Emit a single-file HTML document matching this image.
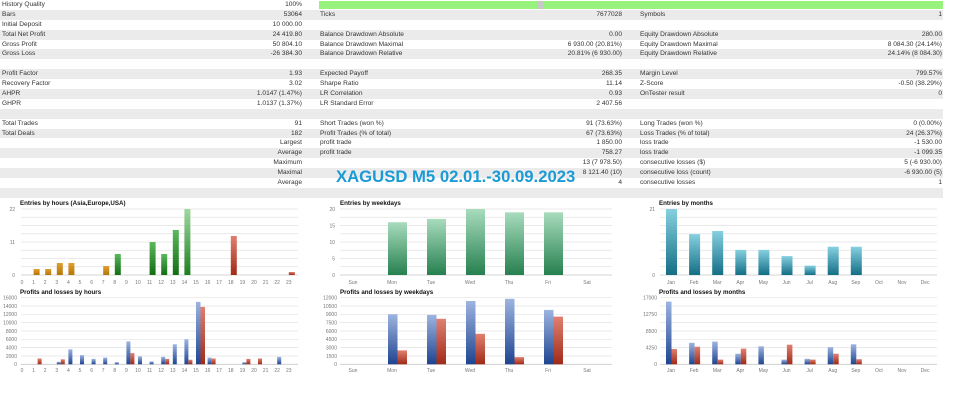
<!DOCTYPE html>
<html><head><meta charset="utf-8"><style>
body{margin:0;width:960px;height:412px;background:#fff;overflow:hidden;font-family:"Liberation Sans",sans-serif;}
.t{position:absolute;left:0;top:0;width:943px;}
.r{height:9.9px;position:relative;font-size:6.6px;line-height:9.9px;color:#333;}
.r.s{background:#ebebeb;}
.r span{position:absolute;white-space:nowrap;}
.a{left:2px}.b{right:641px;text-align:right}.c{left:320px}.d{right:321px;text-align:right}.e{left:640px}.f{right:1px;text-align:right}
.title{position:absolute;left:336px;top:167px;font-size:16.7px;font-weight:bold;color:#1b9ad6;}
svg{position:absolute;left:0;top:0}
svg text{font-family:"Liberation Sans",sans-serif;}
</style></head><body>
<div class="t">
<div class="r"><span class="a">History Quality</span><span class="b">100%</span></div>
<div class="r s"><span class="a">Bars</span><span class="b">53064</span><span class="c">Ticks</span><span class="d">7677028</span><span class="e">Symbols</span><span class="f">1</span></div>
<div class="r"><span class="a">Initial Deposit</span><span class="b">10 000.00</span></div>
<div class="r s"><span class="a">Total Net Profit</span><span class="b">24 419.80</span><span class="c">Balance Drawdown Absolute</span><span class="d">0.00</span><span class="e">Equity Drawdown Absolute</span><span class="f">280.00</span></div>
<div class="r"><span class="a">Gross Profit</span><span class="b">50 804.10</span><span class="c">Balance Drawdown Maximal</span><span class="d">6 930.00 (20.81%)</span><span class="e">Equity Drawdown Maximal</span><span class="f">8 084.30 (24.14%)</span></div>
<div class="r s"><span class="a">Gross Loss</span><span class="b">-26 384.30</span><span class="c">Balance Drawdown Relative</span><span class="d">20.81% (6 930.00)</span><span class="e">Equity Drawdown Relative</span><span class="f">24.14% (8 084.30)</span></div>
<div class="r"></div>
<div class="r s"><span class="a">Profit Factor</span><span class="b">1.93</span><span class="c">Expected Payoff</span><span class="d">268.35</span><span class="e">Margin Level</span><span class="f">799.57%</span></div>
<div class="r"><span class="a">Recovery Factor</span><span class="b">3.02</span><span class="c">Sharpe Ratio</span><span class="d">11.14</span><span class="e">Z-Score</span><span class="f">-0.50 (38.29%)</span></div>
<div class="r s"><span class="a">AHPR</span><span class="b">1.0147 (1.47%)</span><span class="c">LR Correlation</span><span class="d">0.93</span><span class="e">OnTester result</span><span class="f">0</span></div>
<div class="r"><span class="a">GHPR</span><span class="b">1.0137 (1.37%)</span><span class="c">LR Standard Error</span><span class="d">2 407.56</span></div>
<div class="r s"></div>
<div class="r"><span class="a">Total Trades</span><span class="b">91</span><span class="c">Short Trades (won %)</span><span class="d">91 (73.63%)</span><span class="e">Long Trades (won %)</span><span class="f">0 (0.00%)</span></div>
<div class="r s"><span class="a">Total Deals</span><span class="b">182</span><span class="c">Profit Trades (% of total)</span><span class="d">67 (73.63%)</span><span class="e">Loss Trades (% of total)</span><span class="f">24 (26.37%)</span></div>
<div class="r"><span class="b">Largest</span><span class="c">profit trade</span><span class="d">1 850.00</span><span class="e">loss trade</span><span class="f">-1 530.00</span></div>
<div class="r s"><span class="b">Average</span><span class="c">profit trade</span><span class="d">758.27</span><span class="e">loss trade</span><span class="f">-1 099.35</span></div>
<div class="r"><span class="b">Maximum</span><span class="d">13 (7 978.50)</span><span class="e">consecutive losses ($)</span><span class="f">5 (-6 930.00)</span></div>
<div class="r s"><span class="b">Maximal</span><span class="d">8 121.40 (10)</span><span class="e">consecutive loss (count)</span><span class="f">-6 930.00 (5)</span></div>
<div class="r"><span class="b">Average</span><span class="d">4</span><span class="e">consecutive losses</span><span class="f">1</span></div>
<div class="r s"></div>
</div>
<div style="position:absolute;left:319px;top:1px;width:624px;height:8px;background:#98f27e"></div>
<div style="position:absolute;left:537px;top:1px;width:7px;height:8px;background:#c8c8c8"></div>
<div class="title">XAGUSD M5 02.01.-30.09.2023</div>

<svg width="960" height="412" viewBox="0 0 960 412">
<defs>
<linearGradient id="go" x1="0" y1="0" x2="0" y2="1"><stop offset="0" stop-color="#e0a030"/><stop offset="1" stop-color="#b47508"/></linearGradient>
<linearGradient id="gg" x1="0" y1="0" x2="0" y2="1"><stop offset="0" stop-color="#5cb85c"/><stop offset="1" stop-color="#136d13"/></linearGradient>
<linearGradient id="gg2" x1="0" y1="0" x2="0" y2="1"><stop offset="0" stop-color="#a0d8a0"/><stop offset="1" stop-color="#1f7f1f"/></linearGradient>
<linearGradient id="gr" x1="0" y1="0" x2="0" y2="1"><stop offset="0" stop-color="#e08070"/><stop offset="1" stop-color="#a02a18"/></linearGradient>
<linearGradient id="gb" x1="0" y1="0" x2="0" y2="1"><stop offset="0" stop-color="#9db4e0"/><stop offset="1" stop-color="#1e4490"/></linearGradient>
<linearGradient id="gw" x1="0" y1="0" x2="0" y2="1"><stop offset="0" stop-color="#a8dcbc"/><stop offset="1" stop-color="#268050"/></linearGradient>
<linearGradient id="gt" x1="0" y1="0" x2="0" y2="1"><stop offset="0" stop-color="#86d0e0"/><stop offset="1" stop-color="#136e86"/></linearGradient>
</defs>
<g stroke="#e2e2e2" stroke-width="0.7">
<path d="M21 209H298M21 217.25H298M21 225.5H298M21 233.75H298M21 242H298M21 250.25H298M21 258.5H298M21 266.75H298"/>
<path d="M340 209H612M340 217.25H612M340 225.5H612M340 233.75H612M340 242H612M340 250.25H612M340 258.5H612M340 266.75H612"/>
<path d="M660 209H937M660 217.25H937M660 225.5H937M660 233.75H937M660 242H937M660 250.25H937M660 258.5H937M660 266.75H937"/>
<path d="M21 297.7H298M21 306H298M21 314.3H298M21 322.6H298M21 331H298M21 339.3H298M21 347.6H298M21 356H298"/>
<path d="M340 297.7H612M340 306H612M340 314.3H612M340 322.6H612M340 331H612M340 339.3H612M340 347.6H612M340 356H612"/>
<path d="M660 297.7H937M660 306H937M660 314.3H937M660 322.6H937M660 331H937M660 339.3H937M660 347.6H937M660 356H937"/>
</g>
<g stroke="#c8c8c8" stroke-width="0.8"><path d="M21 275H298M340 275H612M660 275H937M21 364.3H298M340 364.3H612M660 364.3H937"/></g>
<g font-size="6.2" font-weight="bold" fill="#111">
<text x="20" y="205">Entries by hours (Asia,Europe,USA)</text>
<text x="20" y="294">Profits and losses by hours</text>
<text x="340" y="205">Entries by weekdays</text>
<text x="340" y="294">Profits and losses by weekdays</text>
<text x="659" y="205">Entries by months</text>
<text x="659" y="294">Profits and losses by months</text>
</g>
<g font-size="5" fill="#777" text-anchor="end">
<text x="15" y="211">22</text><text x="15" y="244">11</text><text x="15" y="277">0</text>
<text x="17" y="299.5">16000</text><text x="17" y="307.8">14000</text><text x="17" y="316.1">12000</text><text x="17" y="324.4">10000</text><text x="17" y="332.8">8000</text><text x="17" y="341.1">6000</text><text x="17" y="349.4">4000</text><text x="17" y="357.8">2000</text><text x="17" y="366">0</text>
<text x="335" y="211">20</text><text x="335" y="227.5">15</text><text x="335" y="244">10</text><text x="335" y="260.5">5</text><text x="335" y="277">0</text>
<text x="337" y="299.5">12000</text><text x="337" y="307.8">10500</text><text x="337" y="316.1">9000</text><text x="337" y="324.4">7500</text><text x="337" y="332.8">6000</text><text x="337" y="341.1">4500</text><text x="337" y="349.4">3000</text><text x="337" y="357.8">1500</text><text x="337" y="366">0</text>
<text x="655" y="211">21</text><text x="655" y="277">0</text>
<text x="657" y="299.5">17000</text><text x="657" y="316.1">12750</text><text x="657" y="332.8">8500</text><text x="657" y="349.4">4250</text><text x="657" y="366">0</text>
</g>
<g font-size="5" fill="#777" text-anchor="middle">
<g transform="translate(0,284)"><text x="22">0</text><text x="33.6">1</text><text x="45.2">2</text><text x="56.8">3</text><text x="68.4">4</text><text x="80">5</text><text x="91.6">6</text><text x="103.2">7</text><text x="114.8">8</text><text x="126.4">9</text><text x="138">10</text><text x="149.6">11</text><text x="161.2">12</text><text x="172.8">13</text><text x="184.4">14</text><text x="196">15</text><text x="207.6">16</text><text x="219.2">17</text><text x="230.8">18</text><text x="242.4">19</text><text x="254">20</text><text x="265.6">21</text><text x="277.2">22</text><text x="288.8">23</text></g>
<g transform="translate(0,372)"><text x="22">0</text><text x="33.6">1</text><text x="45.2">2</text><text x="56.8">3</text><text x="68.4">4</text><text x="80">5</text><text x="91.6">6</text><text x="103.2">7</text><text x="114.8">8</text><text x="126.4">9</text><text x="138">10</text><text x="149.6">11</text><text x="161.2">12</text><text x="172.8">13</text><text x="184.4">14</text><text x="196">15</text><text x="207.6">16</text><text x="219.2">17</text><text x="230.8">18</text><text x="242.4">19</text><text x="254">20</text><text x="265.6">21</text><text x="277.2">22</text><text x="288.8">23</text></g>
<g transform="translate(0,284)"><text x="353">Sun</text><text x="392">Mon</text><text x="431">Tue</text><text x="470">Wed</text><text x="509">Thu</text><text x="548">Fri</text><text x="587">Sat</text></g>
<g transform="translate(0,372)"><text x="353">Sun</text><text x="392">Mon</text><text x="431">Tue</text><text x="470">Wed</text><text x="509">Thu</text><text x="548">Fri</text><text x="587">Sat</text></g>
<g transform="translate(0,284)"><text x="671">Jan</text><text x="694.1">Feb</text><text x="717.2">Mar</text><text x="740.3">Apr</text><text x="763.4">May</text><text x="786.5">Jun</text><text x="809.6">Jul</text><text x="832.7">Aug</text><text x="855.8">Sep</text><text x="878.9">Oct</text><text x="902">Nov</text><text x="925.1">Dec</text></g>
<g transform="translate(0,372)"><text x="671">Jan</text><text x="694.1">Feb</text><text x="717.2">Mar</text><text x="740.3">Apr</text><text x="763.4">May</text><text x="786.5">Jun</text><text x="809.6">Jul</text><text x="832.7">Aug</text><text x="855.8">Sep</text><text x="878.9">Oct</text><text x="902">Nov</text><text x="925.1">Dec</text></g>
</g>
<g fill="url(#go)"><rect x="33.6" y="269" width="6" height="6"/><rect x="45.2" y="269" width="6" height="6"/><rect x="56.8" y="263" width="6" height="12"/><rect x="68.4" y="263" width="6" height="12"/><rect x="103.2" y="266" width="6" height="9"/></g>
<g fill="url(#gg)"><rect x="114.8" y="254" width="6" height="21"/><rect x="149.6" y="242" width="6" height="33"/><rect x="161.2" y="254" width="6" height="21"/><rect x="172.8" y="230" width="6" height="45"/></g>
<rect x="184.4" y="209" width="6" height="66" fill="url(#gg2)"/>
<g fill="url(#gr)"><rect x="230.8" y="236" width="6" height="39"/><rect x="288.8" y="272" width="6" height="3"/></g>
<g fill="url(#gb)">
<rect x="56.8" y="361.8" width="4" height="2.5"/><rect x="68.4" y="349.3" width="4" height="15"/><rect x="80" y="355.1" width="4" height="9.2"/><rect x="91.6" y="358.9" width="4" height="5.4"/><rect x="103.2" y="357.6" width="4" height="6.7"/><rect x="114.8" y="362.2" width="4" height="2.1"/><rect x="126.4" y="341.4" width="4" height="22.9"/><rect x="138" y="356.4" width="4" height="7.9"/><rect x="149.6" y="361.4" width="4" height="2.9"/><rect x="161.2" y="356.8" width="4" height="7.5"/><rect x="172.8" y="344.3" width="4" height="20"/><rect x="184.4" y="339.3" width="4" height="25"/><rect x="196" y="301.9" width="4.5" height="62.4"/><rect x="207.6" y="357.6" width="4" height="6.7"/><rect x="242.4" y="362.2" width="4" height="2.1"/><rect x="277.2" y="356.8" width="4" height="7.5"/>
</g>
<g fill="url(#gr)">
<rect x="37.6" y="358.5" width="4" height="5.8"/><rect x="60.8" y="359.3" width="4" height="5"/><rect x="130.4" y="353.1" width="4" height="11.2"/><rect x="165.2" y="358.9" width="4" height="5.4"/><rect x="188.4" y="359.7" width="4" height="4.6"/><rect x="200.5" y="306.9" width="4.5" height="57.4"/><rect x="211.6" y="358.5" width="4" height="5.8"/><rect x="246.4" y="358.9" width="4" height="5.4"/><rect x="258" y="358.5" width="4" height="5.8"/>
</g>
<g fill="url(#gw)"><rect x="388" y="222.2" width="19" height="52.8"/><rect x="427" y="218.9" width="19" height="56.1"/><rect x="466" y="209" width="19" height="66"/><rect x="505" y="212.3" width="19" height="62.7"/><rect x="544" y="212.3" width="19" height="62.7"/></g>
<g fill="url(#gb)"><rect x="388" y="314.3" width="9.5" height="50"/><rect x="427" y="314.9" width="9.5" height="49.4"/><rect x="466" y="301" width="9.5" height="63.3"/><rect x="505" y="298.8" width="9.5" height="65.5"/><rect x="544" y="309.9" width="9.5" height="54.4"/></g>
<g fill="url(#gr)"><rect x="397.5" y="350.4" width="9.5" height="13.9"/><rect x="436.5" y="318.8" width="9.5" height="45.5"/><rect x="475.5" y="333.8" width="9.5" height="30.5"/><rect x="514.5" y="357.1" width="9.5" height="7.2"/><rect x="553.5" y="316.6" width="9.5" height="47.7"/></g>
<g fill="url(#gt)"><rect x="666" y="209" width="11" height="66"/><rect x="689.1" y="234.1" width="11" height="40.9"/><rect x="712.2" y="231" width="11" height="44"/><rect x="735.3" y="249.9" width="11" height="25.1"/><rect x="758.4" y="249.9" width="11" height="25.1"/><rect x="781.5" y="256.1" width="11" height="18.9"/><rect x="804.6" y="265.6" width="11" height="9.4"/><rect x="827.7" y="246.7" width="11" height="28.3"/><rect x="850.8" y="246.7" width="11" height="28.3"/></g>
<g fill="url(#gb)"><rect x="666" y="301.6" width="5.5" height="62.7"/><rect x="689.1" y="342.8" width="5.5" height="21.5"/><rect x="712.2" y="341.6" width="5.5" height="22.7"/><rect x="735.3" y="353.7" width="5.5" height="10.6"/><rect x="758.4" y="346.3" width="5.5" height="18"/><rect x="781.5" y="359.6" width="5.5" height="4.7"/><rect x="804.6" y="358.8" width="5.5" height="5.5"/><rect x="827.7" y="347.1" width="5.5" height="17.2"/><rect x="850.8" y="344.3" width="5.5" height="20"/></g>
<g fill="url(#gr)"><rect x="671.5" y="349" width="5.5" height="15.3"/><rect x="694.6" y="346.7" width="5.5" height="17.6"/><rect x="717.7" y="359.6" width="5.5" height="4.7"/><rect x="740.8" y="348.6" width="5.5" height="15.7"/><rect x="786.9" y="344.7" width="5.5" height="19.6"/><rect x="810.1" y="359.6" width="5.5" height="4.7"/><rect x="833.2" y="353.7" width="5.5" height="10.6"/><rect x="856.3" y="359.2" width="5.5" height="5.1"/></g>
</svg>
</body></html>
